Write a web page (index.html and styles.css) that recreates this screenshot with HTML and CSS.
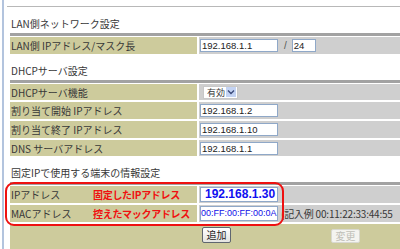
FILE: index.html
```html
<!DOCTYPE html>
<html lang="ja">
<head>
    <meta charset="UTF-8">
    <title>LAN側ネットワーク設定</title>
    <link rel="stylesheet" href="styles.css">
</head>
<body>
    <div class="page">
        <div class="topline"></div>

        <div class="title">LAN側ネットワーク設定</div>
        <div class="bar"></div>
        <div class="rows">
            <div class="row">
                <div class="label">LAN側 IPアドレス/マスク長</div>
                <div class="value">
                    <span class="field">192.168.1.1</span>
                    <span class="slash">/</span>
                    <span class="field mask">24</span>
                </div>
            </div>
        </div>

        <div class="title">DHCPサーバ設定</div>
        <div class="bar"></div>
        <div class="rows">
            <div class="row">
                <div class="label">DHCPサーバ機能</div>
                <div class="value">
                    <span class="select">有効
                        <span class="arrow">
                            <svg width="8" height="6" viewBox="0 0 8 6"><path d="M1 1.5 L4 4.5 L7 1.5" fill="none" stroke="#3a4a7a" stroke-width="1.4"/></svg>
                        </span>
                    </span>
                </div>
            </div>
            <div class="row">
                <div class="label">割り当て開始 IPアドレス</div>
                <div class="value"><span class="field">192.168.1.2</span></div>
            </div>
            <div class="row">
                <div class="label">割り当て終了 IPアドレス</div>
                <div class="value"><span class="field">192.168.1.10</span></div>
            </div>
            <div class="row">
                <div class="label">DNS サーバアドレス</div>
                <div class="value"><span class="field">192.168.1.1</span></div>
            </div>
        </div>

        <div class="title">固定IPで使用する端末の情報設定</div>
        <div class="bar"></div>
        <div class="rows">
            <div class="row">
                <div class="label"><span class="name">IPアドレス</span><span class="note">固定したIPアドレス</span></div>
                <div class="value"><span class="field big">192.168.1.30</span></div>
            </div>
            <div class="row">
                <div class="label"><span class="name">MACアドレス</span><span class="note">控えたマックアドレス</span></div>
                <div class="value">
                    <span class="field mac">00:FF:00:FF:00:0A</span>
                    <span class="example">(記入例 00:11:22:33:44:55</span>
                </div>
            </div>
            <div class="buttons">
                <span class="btn">追加</span>
                <span class="btn off">変更</span>
            </div>
        </div>

        <div class="mark"></div>
    </div>
</body>
</html>
```

FILE: styles.css
```css
body {
    margin: 0;
    background: white;
    overflow: hidden;
    font-family: "Noto Sans CJK JP", "Liberation Sans", sans-serif;
    font-size: 10px;
    color: #383838;
}
.page {
    position: relative;
    height: 249px;
    margin-left: 2px;
    border-left: 2px solid #b3c4de;
    padding-left: 6px;
    overflow: hidden;
}
.topline {
    height: 1px;
    margin-top: 6px;
    margin-left: -3px;
    background: #b8b8b8;
}
.title {
    height: 26px;
    display: flex;
    align-items: flex-end;
    padding-left: 1px;
    padding-bottom: 3px;
    box-sizing: border-box;
    line-height: 12px;
}
.bar {
    height: 3px;
    background: #a2a2a2;
}
.rows {
    display: flex;
    flex-direction: column;
    gap: 2px;
    padding-top: 1px;
}
.row {
    display: grid;
    grid-template-columns: 187px 1fr;
    gap: 2px;
    height: 16.7px;
}
.label {
    background: #cdcb9c;
    display: flex;
    align-items: center;
    padding-left: 1px;
    white-space: nowrap;
}
.value {
    background: #cfcfcf;
    display: flex;
    align-items: center;
    padding-left: 1px;
    white-space: nowrap;
    overflow: hidden;
}
.name {
    width: 82px;
}
.note {
    color: #f01010;
    font-weight: bold;
    letter-spacing: -0.3px;
}
.field {
    box-sizing: border-box;
    flex-shrink: 0;
    width: 78px;
    height: 13px;
    background: white;
    border: 1px solid #8fa8c8;
    font-family: "Liberation Sans", sans-serif;
    font-size: 9.5px;
    line-height: 11px;
    padding-left: 1px;
    color: #222;
}
.mask {
    width: 24px;
}
.slash {
    margin: 0 5px 0 6px;
    font-family: "Liberation Sans", sans-serif;
    color: #555;
}
.big {
    height: 15px;
    font-size: 12px;
    font-weight: bold;
    line-height: 13px;
    padding-left: 4px;
    color: #1010f0;
}
.mac {
    height: 15px;
    font-size: 9px;
    line-height: 13px;
    padding-left: 0;
    color: #1010e8;
}
.example {
    margin-left: 3px;
    letter-spacing: -0.2px;
}
.select {
    box-sizing: border-box;
    display: flex;
    align-items: center;
    justify-content: space-between;
    width: 35px;
    height: 13px;
    margin-left: 3px;
    padding-left: 3px;
    padding-right: 1px;
    background: white;
    border: 1px solid #c8c8c8;
    line-height: 11px;
    font-size: 9px;
}
.arrow {
    display: flex;
    align-items: center;
    justify-content: center;
    width: 10px;
    height: 10px;
    background: #c3d3f3;
}
.buttons {
    display: flex;
    align-items: flex-start;
    height: 30px;
    padding-top: 3px;
    padding-left: 192px;
    background: #cdcb9c;
    box-sizing: border-box;
}
.btn {
    box-sizing: border-box;
    width: 29px;
    height: 16px;
    display: flex;
    align-items: center;
    justify-content: center;
    border: 1px solid #5f6670;
    border-radius: 2px;
    background: linear-gradient(#ffffff, #e4e4e0);
    color: #222;
}
.btn.off {
    margin-left: 100px;
    margin-top: 2px;
    height: 14px;
    border-color: #d8d8d0;
    background: #f4f4f0;
    color: #c0c0b8;
}
.mark {
    position: absolute;
    left: 1px;
    top: 182px;
    width: 279px;
    height: 44px;
    box-sizing: border-box;
    border: 2px solid #ee1111;
    border-radius: 9px;
}
```
